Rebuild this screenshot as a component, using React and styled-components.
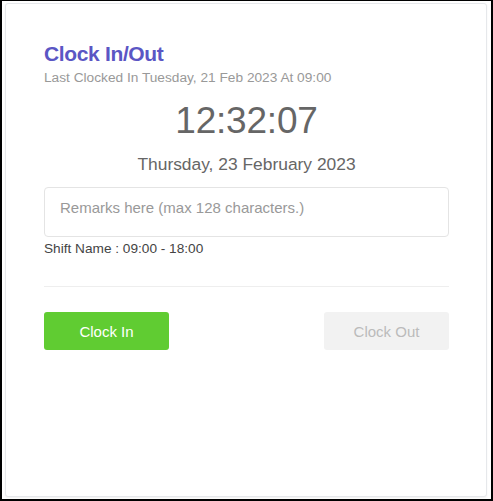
import React from "react";
import styled, { createGlobalStyle } from "styled-components";

const GlobalStyle = createGlobalStyle`
  html, body {
    margin: 0;
    padding: 0;
    background: #ffffff;
    font-family: "Liberation Sans", Arial, sans-serif;
  }
  * {
    box-sizing: border-box;
  }
`;

const Frame = styled.div`
  width: 493px;
  height: 501px;
  border: 1px solid #000;
  border-left-width: 2px;
  border-right-width: 2px;
  border-bottom-width: 2px;
  padding: 2px 4px 2px 3px;
  background: #ffffff;
`;

const Card = styled.div`
  height: 100%;
  background: #fff;
  border: 1px solid #e6e8eb;
  border-radius: 3px;
  box-shadow: 0 1px 2px rgba(0, 0, 0, 0.06);
  padding: 37px 37px 0 38px;
  display: flex;
  flex-direction: column;
`;

const Title = styled.h1`
  margin: 0;
  font-size: 21px;
  line-height: 26px;
  letter-spacing: -0.35px;
  font-weight: bold;
  color: #5b56c4;
`;

const SubTitle = styled.div`
  margin-top: 3px;
  font-size: 13.7px;
  line-height: 16px;
  color: #999;
`;

const Time = styled.div`
  margin-top: 11px;
  text-align: center;
  font-size: 37px;
  line-height: 48px;
  letter-spacing: -0.2px;
  color: #666;
`;

const DateText = styled.div`
  margin-top: 8px;
  text-align: center;
  font-size: 17.4px;
  line-height: 22px;
  color: #666;
`;

const Remarks = styled.textarea`
  margin-top: 12px;
  width: 100%;
  height: 50px;
  border: 1px solid #e4e4e4;
  border-radius: 4px;
  padding: 11px 15px;
  font-family: "Liberation Sans", Arial, sans-serif;
  font-size: 15px;
  line-height: 17px;
  color: #333;
  resize: none;
  outline: none;
  &::placeholder {
    color: #999;
  }
`;

const Shift = styled.div`
  margin-top: 3px;
  font-size: 13.65px;
  line-height: 18px;
  color: #444;
`;

const Divider = styled.hr`
  margin: 28px 0 0 0;
  border: none;
  border-top: 1px solid #eeeeee;
`;

const Actions = styled.div`
  margin-top: 25px;
  display: flex;
  justify-content: space-between;
`;

const Button = styled.button`
  width: 125px;
  height: 38px;
  border: none;
  border-radius: 3px;
  font-family: "Liberation Sans", Arial, sans-serif;
  font-size: 15px;
  background: ${(p) => (p.$disabled ? "#f2f2f2" : "#60cc32")};
  color: ${(p) => (p.$disabled ? "#bbbbbb" : "#ffffff")};
  cursor: ${(p) => (p.$disabled ? "not-allowed" : "pointer")};
`;

export default function App() {
  return (
    <>
      <GlobalStyle />
      <Frame>
        <Card>
          <Title>Clock In/Out</Title>
          <SubTitle>Last Clocked In Tuesday, 21 Feb 2023 At 09:00</SubTitle>
          <Time>12:32:07</Time>
          <DateText>Thursday, 23 February 2023</DateText>
          <Remarks placeholder="Remarks here (max 128 characters.)" />
          <Shift>Shift Name : 09:00 - 18:00</Shift>
          <Divider />
          <Actions>
            <Button>Clock In</Button>
            <Button $disabled>Clock Out</Button>
          </Actions>
        </Card>
      </Frame>
    </>
  );
}
